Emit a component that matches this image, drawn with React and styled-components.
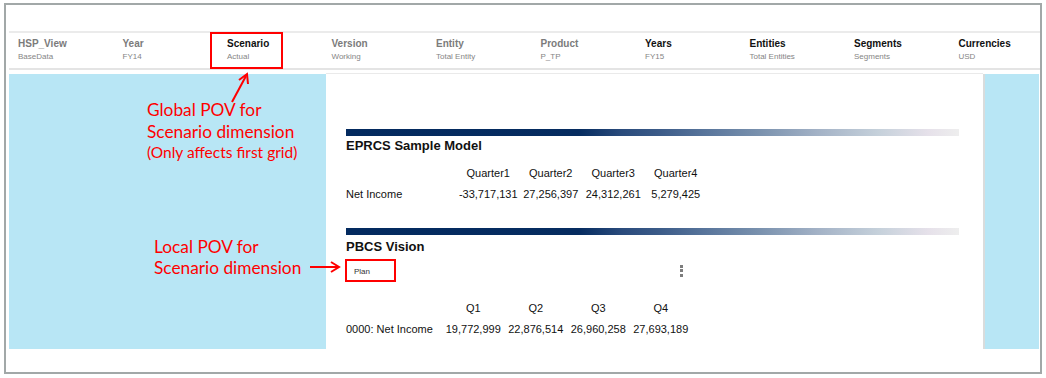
import React from "react";
import styled, { createGlobalStyle } from "styled-components";

const povs = [
  { label: "HSP_View", value: "BaseData" },
  { label: "Year", value: "FY14" },
  { label: "Scenario", value: "Actual", active: true, marked: true },
  { label: "Version", value: "Working" },
  { label: "Entity", value: "Total Entity" },
  { label: "Product", value: "P_TP" },
  { label: "Years", value: "FY15", active: true },
  { label: "Entities", value: "Total Entities", active: true },
  { label: "Segments", value: "Segments", active: true },
  { label: "Currencies", value: "USD", active: true },
];

function App() {
  return (
    <>
      <GlobalStyle />
      <Frame>
        <TopGap />
        <PovBar>
          {povs.map((p) => (
            <PovItem key={p.label} $marked={p.marked}>
              <PovLabel $active={p.active}>{p.label}</PovLabel>
              <PovValue>{p.value}</PovValue>
            </PovItem>
          ))}
        </PovBar>
        <Body>
          <SidePanel $width={317} />
          <Main>
            <Section $top={55}>
              <GradientBar />
              <Title>EPRCS Sample Model</Title>
              <Grid $label={111} $rowTop={9}>
                <span />
                <span>Quarter1</span>
                <span>Quarter2</span>
                <span>Quarter3</span>
                <span>Quarter4</span>
                <RowLabel>Net Income</RowLabel>
                <span>-33,717,131</span>
                <span>27,256,397</span>
                <span>24,312,261</span>
                <span>5,279,425</span>
              </Grid>
            </Section>
            <Section $top={24}>
              <GradientBar />
              <Title $gap={4}>PBCS Vision</Title>
              <Toolbar>
                <LocalPov>Plan</LocalPov>
                <Kebab>
                  <i />
                  <i />
                  <i />
                </Kebab>
              </Toolbar>
              <Grid $label={96} $rowTop={16}>
                <span />
                <span>Q1</span>
                <span>Q2</span>
                <span>Q3</span>
                <span>Q4</span>
                <RowLabel>0000: Net Income</RowLabel>
                <span>19,772,999</span>
                <span>22,876,514</span>
                <span>26,960,258</span>
                <span>27,693,189</span>
              </Grid>
            </Section>
          </Main>
          <SidePanel $width={56} $edge />
        </Body>

        <Note $left={141} $top={96} $gap={4}>
          <div>Global POV for</div>
          <div>Scenario dimension</div>
          <Small>(Only affects first grid)</Small>
        </Note>
        <Arrow $left={222} $top={60} width="32" height="42" viewBox="0 0 32 42">
          <line x1="4" y1="37" x2="18" y2="11" stroke="#ff0000" strokeWidth="2" />
          <polyline points="11,15 19,9 20,19" fill="none" stroke="#ff0000" strokeWidth="2" />
        </Arrow>

        <Note $left={148} $top={233} $gap={3}>
          <div>Local POV for</div>
          <div>Scenario dimension</div>
        </Note>
        <Arrow $left={302} $top={255} width="36" height="14" viewBox="0 0 36 14">
          <line x1="2" y1="7" x2="30" y2="7" stroke="#ff0000" strokeWidth="2" />
          <polyline points="23,2 31,7 23,12" fill="none" stroke="#ff0000" strokeWidth="2" />
        </Arrow>
      </Frame>
    </>
  );
}

export default App;

const GlobalStyle = createGlobalStyle`
  body {
    margin: 0;
    background: #ffffff;
    font-family: "Liberation Sans", Arial, sans-serif;
  }
`;

const Frame = styled.div`
  position: relative;
  box-sizing: border-box;
  margin: 3px 0 0 4px;
  width: 1038px;
  height: 371px;
  border: 2px solid #a2a8a8;
  background: #ffffff;
`;

const TopGap = styled.div`
  height: 26px;
`;

const PovBar = styled.div`
  display: flex;
  box-sizing: border-box;
  height: 39px;
  margin-left: 3px;
  padding: 5px 0 0 9px;
  border-top: 2px solid #ebebeb;
  border-bottom: 2px solid #e4e4e4;
`;

const PovItem = styled.div`
  position: relative;
  width: 104.5px;
  flex: none;
  ${(p) =>
    p.$marked &&
    `
    &::after {
      content: "";
      position: absolute;
      left: -17px;
      top: -6px;
      width: 73px;
      height: 37px;
      box-sizing: border-box;
      border: 2px solid #ff0000;
    }
  `}
`;

const PovLabel = styled.div`
  font-size: 10px;
  line-height: 12px;
  font-weight: bold;
  color: ${(p) => (p.$active ? "#111111" : "#7b7b7b")};
`;

const PovValue = styled.div`
  margin-top: 2px;
  font-size: 8px;
  line-height: 10px;
  color: #858585;
`;

const Body = styled.div`
  display: flex;
  margin: 3px 0 0 3px;
  height: 276px;
`;

const SidePanel = styled.div`
  flex: none;
  box-sizing: border-box;
  width: ${(p) => p.$width}px;
  margin-top: 1px;
  background: #b8e6f5;
  border-left: ${(p) => (p.$edge ? "2px solid #d9dcdc" : "none")};
`;

const Main = styled.div`
  flex: none;
  width: 657px;
  box-sizing: border-box;
  padding: 0 24px 0 20px;
  border-top: 1px solid #eaeaea;
  color: #111111;
`;

const Section = styled.div`
  margin-top: ${(p) => p.$top}px;
`;

const GradientBar = styled.div`
  height: 7px;
  background: linear-gradient(
    to right,
    #032a5f 0%,
    #062c60 38%,
    #2a4b7c 45%,
    #3b5b88 51%,
    #56739a 58%,
    #7890ad 67%,
    #a3b2c6 77%,
    #c6d1db 87%,
    #e6e1ea 95%,
    #eeeeee 100%
  );
`;

const Title = styled.div`
  margin-top: ${(p) => p.$gap || 2}px;
  font-size: 13px;
  line-height: 16px;
  font-weight: bold;
  color: #111111;
`;

const Grid = styled.div`
  display: grid;
  grid-template-columns: ${(p) => p.$label}px repeat(4, 62.5px);
  grid-auto-rows: 20.5px;
  margin-top: ${(p) => p.$rowTop}px;
  font-size: 11px;
  line-height: 20px;
  span {
    text-align: center;
    white-space: nowrap;
  }
`;

const RowLabel = styled.span`
  && {
    text-align: left;
  }
`;

const Toolbar = styled.div`
  display: flex;
  align-items: center;
  justify-content: space-between;
  width: 338px;
  margin-top: 4px;
  margin-left: -1px;
`;

const LocalPov = styled.div`
  box-sizing: border-box;
  width: 51px;
  height: 23px;
  padding: 6px 0 0 7px;
  border: 2px solid #ff0000;
  font-size: 8px;
  line-height: 10px;
  color: #333333;
`;

const Kebab = styled.div`
  display: flex;
  flex-direction: column;
  gap: 1.5px;
  i {
    display: block;
    width: 3px;
    height: 3px;
    background: #7d7d7d;
  }
`;

const Note = styled.div`
  position: absolute;
  left: ${(p) => p.$left}px;
  top: ${(p) => p.$top}px;
  display: flex;
  flex-direction: column;
  gap: ${(p) => p.$gap}px;
  font-family: Lato, "Open Sans", sans-serif;
  font-size: 17.3px;
  line-height: 18px;
  color: #ff0000;
  white-space: nowrap;
`;

const Small = styled.div`
  margin-top: 0;
  font-size: 15.5px;
  line-height: 14px;
`;

const Arrow = styled.svg`
  position: absolute;
  left: ${(p) => p.$left}px;
  top: ${(p) => p.$top}px;
`;
